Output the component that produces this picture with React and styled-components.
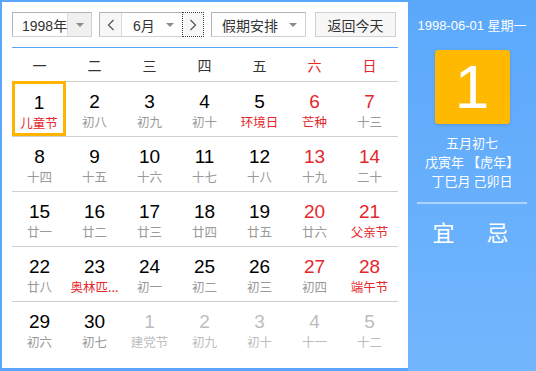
import React from "react";
import styled, { createGlobalStyle } from "styled-components";

const Global = createGlobalStyle`
  html, body { margin: 0; padding: 0; background: #fff; }
  body { font-family: "Liberation Sans", Arial, "Noto Sans CJK SC", sans-serif; }
  * { box-sizing: border-box; }
`;

const Widget = styled.div`
  width: 536px;
  height: 371px;
  display: flex;
  background: #5aa6fa;
  padding: 2px 0 3px 2px;
`;

const Main = styled.div`
  width: 406px;
  background: #fff;
  padding: 10px 10px 0 10px;
  display: flex;
  flex-direction: column;
`;

const Toolbar = styled.div`
  display: flex;
  height: 25px;
  align-items: stretch;
`;

const Select = styled.div`
  width: ${(p) => p.$w}px;
  margin-right: ${(p) => p.$mr || 0}px;
  display: flex;
  border: 1px solid #b4b4b4;
  border-right-color: #d2d2d2;
  border-bottom-color: #d2d2d2;
  background: #fff;
  font-size: 14px;
  color: #333;
`;

const SelectText = styled.div`
  flex: 1;
  min-width: 0;
  white-space: nowrap;
  display: flex;
  align-items: center;
  padding-left: ${(p) => p.$pl}px;
  font-family: "Liberation Sans", Arial, "Noto Sans CJK SC", sans-serif;
`;

const Caret = styled.div`
  width: 24px;
  flex: none;
  display: flex;
  align-items: center;
  justify-content: center;
  background: ${(p) => (p.$plain ? "#fff" : "#f0f0f0")};
  border-left: ${(p) => (p.$plain ? "none" : "1px solid #dcdcdc")};
  &::after {
    content: "";
    border-left: 4px solid transparent;
    border-right: 4px solid transparent;
    border-top: 4px solid #8a8a8a;
  }
`;

const MonthGroup = styled.div`
  width: 105px;
  margin-right: 7px;
  display: flex;
  border: 1px solid #b4b4b4;
  border-right: none;
  border-bottom-color: #d2d2d2;
  font-size: 14px;
  color: #333;
`;

const ArrowBtn = styled.div`
  width: 22px;
  flex: none;
  display: flex;
  align-items: center;
  justify-content: center;
  background: #f7f7f7;
  border-right: ${(p) => (p.$right ? "none" : "1px solid #dcdcdc")};
  outline: ${(p) => (p.$focus ? "1px dotted #444" : "none")};
  outline-offset: -1px;
  margin-top: ${(p) => (p.$focus ? "-1px" : "0")};
  margin-bottom: ${(p) => (p.$focus ? "-1px" : "0")};
`;

const TodayBtn = styled.div`
  width: 81px;
  margin-left: 2px;
  display: flex;
  align-items: center;
  justify-content: center;
  background: #f7f7f7;
  border: 1px solid #d0d0d0;
  font-size: 14px;
  color: #333;
`;

const BlueLine = styled.div`
  height: 1px;
  background: #5aa6fa;
  margin-top: 10px;
`;

const WeekHead = styled.div`
  display: grid;
  grid-template-columns: repeat(7, 55px);
  height: 34px;
  border-bottom: 1px solid #cfcfcf;
`;

const WeekDay = styled.div`
  display: flex;
  align-items: center;
  justify-content: center;
  font-size: 14px;
  padding-top: 1px;
  color: ${(p) => (p.$red ? "#e5262b" : "#333")};
  font-family: "Noto Sans CJK SC", sans-serif;
`;

const Row = styled.div`
  display: grid;
  grid-template-columns: repeat(7, 55px);
  height: 55px;
  border-bottom: ${(p) => (p.$last ? "none" : "1px solid #cfcfcf")};
`;

const Cell = styled.div`
  display: flex;
  flex-direction: column;
  align-items: center;
  margin-top: ${(p) => (p.$sel ? "-1px" : "0")};
  margin-right: ${(p) => (p.$sel ? "1px" : "0")};
  height: ${(p) => (p.$sel ? "55px" : "auto")};
  border: ${(p) => (p.$sel ? "3px solid #ffb400" : "none")};
  padding-top: ${(p) => (p.$sel ? "8px" : "9px")};
`;

const DayNum = styled.div`
  font-size: 19px;
  line-height: 22px;
  font-family: "Liberation Sans", Arial, sans-serif;
  color: ${(p) => (p.$other ? "#bdbdbd" : p.$red ? "#e5262b" : "#000")};
`;

const Lunar = styled.div`
  font-size: 12.5px;
  line-height: 16px;
  margin-top: 1px;
  font-family: "Noto Sans CJK SC", sans-serif;
  white-space: nowrap;
  color: ${(p) => (p.$other ? "#bdbdbd" : p.$red ? "#e5262b" : "#999")};
`;

const Side = styled.div`
  flex: 1;
  margin: -2px 0 -3px 0;
  background: linear-gradient(to bottom, #5ba8fb, #72b6fd);
  display: flex;
  flex-direction: column;
  align-items: center;
  color: #fff;
  padding-top: 18px;
`;

const DateLine = styled.div`
  font-size: 13px;
  line-height: 16px;
  font-family: "Liberation Sans", Arial, "Noto Sans CJK SC", sans-serif;
`;

const BigDay = styled.div`
  width: 75px;
  height: 74px;
  margin-top: 16px;
  background: #ffb900;
  border-radius: 3px;
  box-shadow: 0 1px 3px rgba(0, 0, 0, 0.15);
  display: flex;
  align-items: center;
  justify-content: center;
  font-size: 62px;
  font-family: "Liberation Sans", Arial, sans-serif;
  line-height: 1;
`;

const InfoLines = styled.div`
  margin-top: 9px;
  display: flex;
  flex-direction: column;
  align-items: center;
  font-size: 13px;
  line-height: 19px;
  font-family: "Noto Sans CJK SC", sans-serif;
`;

const Divider = styled.div`
  width: 110px;
  height: 2px;
  background: rgba(255, 255, 255, 0.45);
  margin-top: 12px;
`;

const YiJi = styled.div`
  display: flex;
  gap: 32px;
  margin-top: 12px;
  font-size: 22px;
  line-height: 30px;
  font-family: "Noto Sans CJK SC", sans-serif;
  padding-right: 3px;
`;

const Chevron = ({ dir }) => (
  <svg width="8" height="12" viewBox="0 0 8 12">
    <path
      d={dir === "left" ? "M6.5 1 L1.5 6 L6.5 11" : "M1.5 1 L6.5 6 L1.5 11"}
      fill="none"
      stroke="#555"
      strokeWidth="1.2"
    />
  </svg>
);

const weeks = [
  [
    { d: 1, l: "儿童节", lr: true },
    { d: 2, l: "初八" },
    { d: 3, l: "初九" },
    { d: 4, l: "初十" },
    { d: 5, l: "环境日", lr: true },
    { d: 6, l: "芒种", lr: true, r: true },
    { d: 7, l: "十三", r: true },
  ],
  [
    { d: 8, l: "十四" },
    { d: 9, l: "十五" },
    { d: 10, l: "十六" },
    { d: 11, l: "十七" },
    { d: 12, l: "十八" },
    { d: 13, l: "十九", r: true },
    { d: 14, l: "二十", r: true },
  ],
  [
    { d: 15, l: "廿一" },
    { d: 16, l: "廿二" },
    { d: 17, l: "廿三" },
    { d: 18, l: "廿四" },
    { d: 19, l: "廿五" },
    { d: 20, l: "廿六", r: true },
    { d: 21, l: "父亲节", lr: true, r: true },
  ],
  [
    { d: 22, l: "廿八" },
    { d: 23, l: "奥林匹...", lr: true },
    { d: 24, l: "初一" },
    { d: 25, l: "初二" },
    { d: 26, l: "初三" },
    { d: 27, l: "初四", r: true },
    { d: 28, l: "端午节", lr: true, r: true },
  ],
  [
    { d: 29, l: "初六" },
    { d: 30, l: "初七" },
    { d: 1, l: "建党节", o: true },
    { d: 2, l: "初九", o: true },
    { d: 3, l: "初十", o: true },
    { d: 4, l: "十一", o: true },
    { d: 5, l: "十二", o: true },
  ],
];

const heads = ["一", "二", "三", "四", "五", "六", "日"];

export default function App() {
  return (
    <>
      <Global />
      <Widget>
        <Main>
          <Toolbar>
            <Select $w={80} $mr={7}>
              <SelectText $pl={9}>1998年</SelectText>
              <Caret />
            </Select>
            <MonthGroup>
              <ArrowBtn>
                <Chevron dir="left" />
              </ArrowBtn>
              <SelectText $pl={11}>6月</SelectText>
              <Caret $plain />
              <ArrowBtn $right $focus>
                <Chevron dir="right" />
              </ArrowBtn>
            </MonthGroup>
            <Select $w={95} $mr={7}>
              <SelectText $pl={10}>假期安排</SelectText>
              <Caret $plain />
            </Select>
            <TodayBtn>返回今天</TodayBtn>
          </Toolbar>
          <BlueLine />
          <WeekHead>
            {heads.map((h, i) => (
              <WeekDay key={h} $red={i >= 5}>
                {h}
              </WeekDay>
            ))}
          </WeekHead>
          {weeks.map((w, wi) => (
            <Row key={wi} $last={wi === weeks.length - 1}>
              {w.map((c, ci) => (
                <Cell key={ci} $sel={wi === 0 && ci === 0}>
                  <DayNum $red={c.r} $other={c.o}>
                    {c.d}
                  </DayNum>
                  <Lunar $red={c.lr} $other={c.o}>
                    {c.l}
                  </Lunar>
                </Cell>
              ))}
            </Row>
          ))}
        </Main>
        <Side>
          <DateLine>1998-06-01 星期一</DateLine>
          <BigDay>1</BigDay>
          <InfoLines>
            <div>五月初七</div>
            <div>戊寅年 【虎年】</div>
            <div>丁巳月 己卯日</div>
          </InfoLines>
          <Divider />
          <YiJi>
            <span>宜</span>
            <span>忌</span>
          </YiJi>
        </Side>
      </Widget>
    </>
  );
}
